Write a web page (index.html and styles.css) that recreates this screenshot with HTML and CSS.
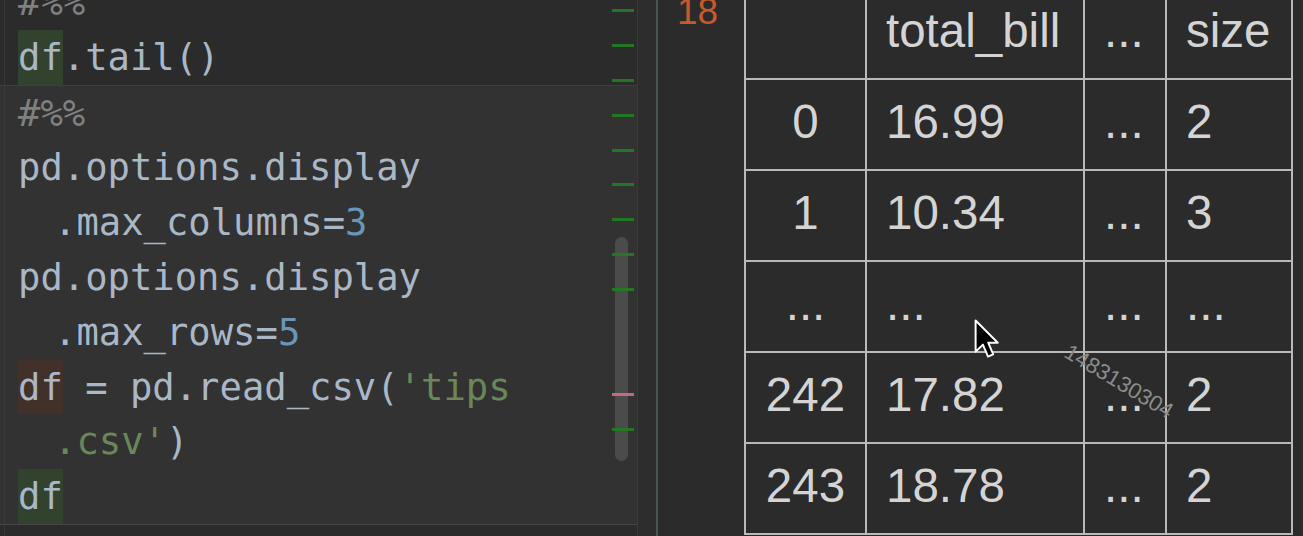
FILE: index.html
```html
<!DOCTYPE html>
<html>
<head>
<meta charset="utf-8">
<link rel="stylesheet" href="styles.css">
</head>
<body>
<div class="app">
  <div class="editor">
    <div class="cells">
      <div class="cell cell-prev">
        <div class="line"><span class="cm">#%%</span></div>
        <div class="line"><span class="hl-read">df</span>.tail()</div>
      </div>
      <div class="cell cell-active">
        <div class="line"><span class="cm">#%%</span></div>
        <div class="line">pd.options.display</div>
        <div class="line wrap">.max_columns=<span class="num">3</span></div>
        <div class="line">pd.options.display</div>
        <div class="line wrap">.max_rows=<span class="num">5</span></div>
        <div class="line"><span class="hl-write">df</span> = pd.read_csv(<span class="str">'tips</span></div>
        <div class="line wrap"><span class="str">.csv'</span>)</div>
        <div class="line"><span class="hl-read">df</span></div>
      </div>
      <div class="cell cell-next">
        <div class="line"><span class="cm">#%%</span></div>
      </div>
    </div>
    <div class="stripe">
      <div class="thumb"></div>
      <div class="mark" style="top:9px"></div>
      <div class="mark" style="top:44px"></div>
      <div class="mark" style="top:79px"></div>
      <div class="mark" style="top:114px"></div>
      <div class="mark" style="top:149px"></div>
      <div class="mark" style="top:183px"></div>
      <div class="mark" style="top:218px"></div>
      <div class="mark" style="top:253px"></div>
      <div class="mark" style="top:288px"></div>
      <div class="mark mark-del" style="top:393px"></div>
      <div class="mark" style="top:428px"></div>
    </div>
  </div>
  <div class="splitter"></div>
  <div class="output">
    <div class="prompt">18</div>
    <table class="df">
      <colgroup>
        <col class="c-idx"><col class="c-bill"><col class="c-dots"><col class="c-size">
      </colgroup>
      <thead>
        <tr><th class="idx"></th><th>total_bill</th><th>...</th><th>size</th></tr>
      </thead>
      <tbody>
        <tr><td class="idx">0</td><td>16.99</td><td>...</td><td>2</td></tr>
        <tr><td class="idx">1</td><td>10.34</td><td>...</td><td>3</td></tr>
        <tr><td class="idx">...</td><td>...</td><td>...</td><td>...</td></tr>
        <tr><td class="idx">242</td><td>17.82</td><td>...</td><td>2</td></tr>
        <tr><td class="idx">243</td><td>18.78</td><td>...</td><td>2</td></tr>
      </tbody>
    </table>
  </div>
  <div class="watermark">1483130304</div>
  <svg class="cursor" width="26" height="41" viewBox="0 0 17 27">
    <path d="M1 1 L1 21.5 L5.8 16.9 L9.2 24.8 L12.6 23.3 L9.3 15.6 L15.6 15.6 Z" fill="#000" stroke="#fff" stroke-width="1.3" stroke-linejoin="round"/>
  </svg>
</div>
</body>
</html>
```
FILE: styles.css
```css
html, body {
  margin: 0;
  padding: 0;
  background: #2b2b2b;
  overflow: hidden;
}
.app {
  position: relative;
  display: flex;
  width: 1303px;
  height: 536px;
  overflow: hidden;
  background: #2b2b2b;
}
.editor {
  position: relative;
  flex: none;
  width: 637px;
  height: 536px;
  overflow: hidden;
  background: #2b2b2b;
}
.editor::before {
  content: "";
  position: absolute;
  left: 4px;
  top: 0;
  bottom: 0;
  width: 1px;
  background: #383838;
  z-index: 1;
}
.cells {
  display: flex;
  flex-direction: column;
  margin-top: -25px;
  font-family: "DejaVu Sans Mono", monospace;
  font-size: 37.2px;
  color: #a9b7c6;
}
.cell {
  padding-left: 18px;
}
.cell-prev {
  background: #2b2b2b;
  border-bottom: 1px solid #3e3e3e;
}
.cell-active {
  background: #323232;
  border-bottom: 1px solid #474747;
}
.cell-next {
  background: #2b2b2b;
}
.line {
  height: 54.8px;
  line-height: 54.8px;
  white-space: pre;
}
.line.wrap {
  padding-left: 36px;
}
.cm { color: #808080; }
.num { color: #6897bb; }
.str { color: #6a8759; }
.hl-read, .hl-write {
  display: inline-block;
  vertical-align: top;
  height: 54.8px;
}
.hl-read { background: #33422f; }
.hl-write { background: #42312a; }
.stripe {
  position: absolute;
  top: 0;
  right: 3px;
  width: 22px;
  height: 536px;
}
.thumb {
  position: absolute;
  left: 3px;
  top: 237px;
  width: 13px;
  height: 224px;
  border-radius: 7px;
  background: #4b4b4b;
}
.mark {
  position: absolute;
  left: 0;
  width: 22px;
  height: 3px;
  background: #237a23;
  opacity: 0.95;
}
.mark-del { background: #c5707e; }
.splitter {
  flex: none;
  width: 18px;
  background: #2d2d2d;
  border-left: 1px solid #393939;
  border-right: 2px solid #4a5353;
}
.output {
  flex: 1;
  display: flex;
  align-items: flex-start;
  padding-left: 19px;
  font-family: "Liberation Sans", Arial, sans-serif;
}
.prompt {
  flex: none;
  width: 67px;
  margin-top: -6px;
  font-size: 37px;
  line-height: 36px;
  color: #c9582b;
}
.df {
  flex: none;
  margin-top: -13px;
  border-collapse: collapse;
  table-layout: fixed;
  width: 547px;
  color: #d4d4d4;
  font-size: 47.5px;
}
.c-idx { width: 121px; }
.c-bill { width: 218px; }
.c-dots { width: 82px; }
.c-size { width: 126px; }
.df th, .df td {
  height: 83px;
  padding: 0 0 6px 19px;
  border: 2px solid #b9b9b9;
  text-align: left;
  font-weight: normal;
  vertical-align: middle;
  white-space: nowrap;
  overflow: hidden;
}
.df .idx {
  text-align: center;
  padding: 0 0 6px 0;
}
.watermark {
  position: absolute;
  left: 1073px;
  top: 339px;
  transform-origin: 0 0;
  transform: rotate(31deg);
  font-family: "Liberation Sans", Arial, sans-serif;
  font-size: 22px;
  color: #8c8c8c;
  white-space: nowrap;
}
.cursor {
  position: absolute;
  left: 974px;
  top: 319px;
}
```
